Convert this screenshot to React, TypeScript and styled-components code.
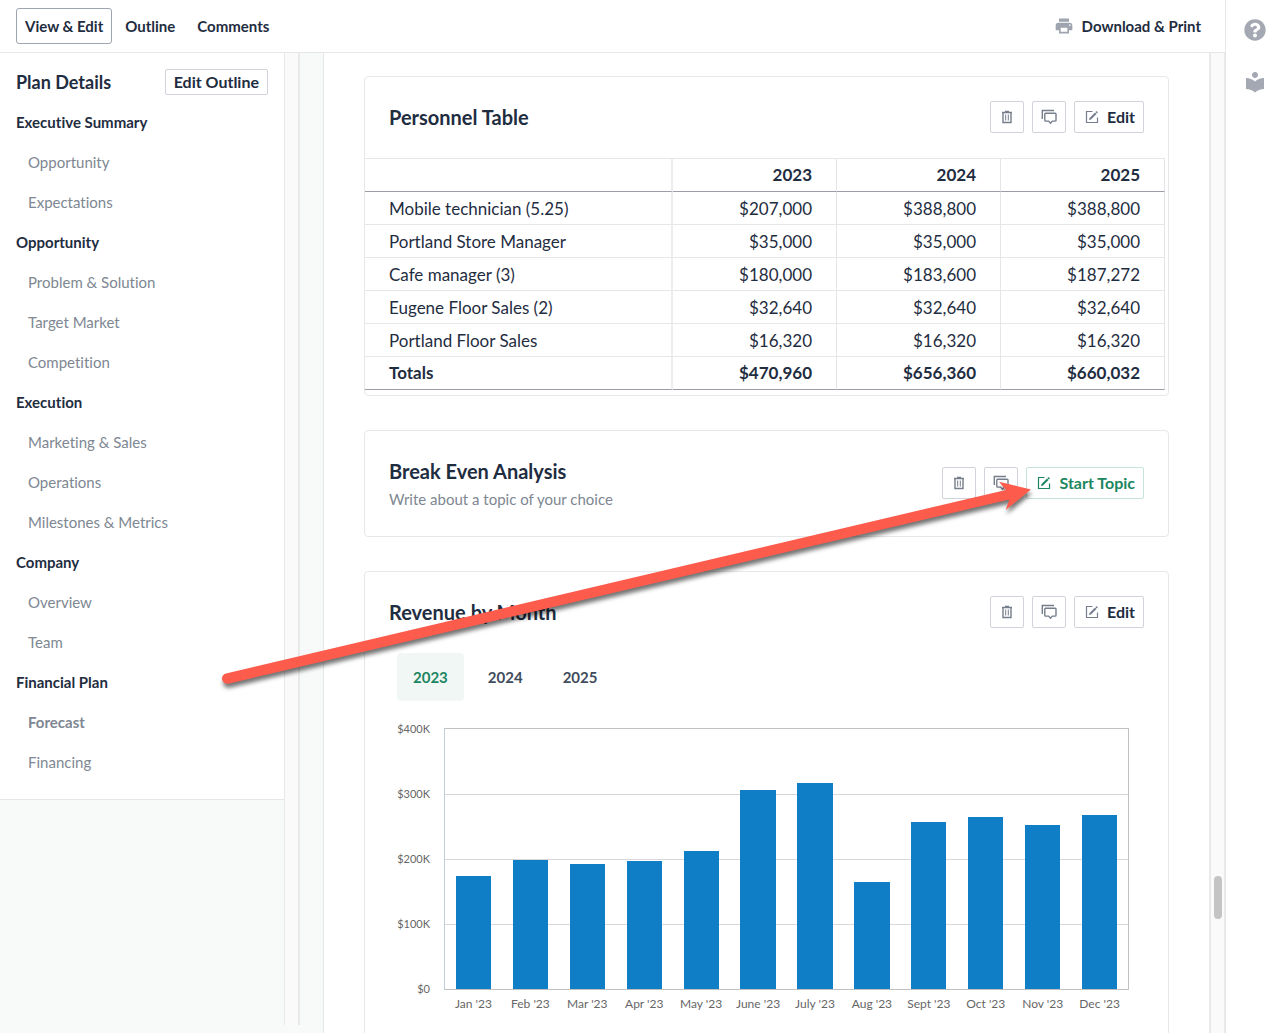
import React from "react";
import styled, { createGlobalStyle, css } from "styled-components";
import { MdLocalLibrary, MdPrint } from "react-icons/md";
import { FaQuestionCircle } from "react-icons/fa";

const ink = "#1f2d41";
const muted = "#7e8792";
const line = "#e6e8e8";
const green = "#1b8660";
const wash = "#f8faf9";

const GlobalStyle = createGlobalStyle`
  * { box-sizing: border-box; }
  body {
    margin: 0;
    color: ${ink};
    background: #fff;
    font-family: Lato, "Open Sans", sans-serif;
    font-size: 15px;
    font-variant-ligatures: none;
    line-height: 20px;
    overflow: hidden;
  }
  button, a { font: inherit; color: inherit; text-decoration: none; }
  button { cursor: pointer; margin: 0; }
  h2, h3, p, ul { margin: 0; padding: 0; }
`;

const Shell = styled.div`
  position: relative;
  display: flex;
  height: 100vh;
  overflow: hidden;
`;

const Workspace = styled.div`
  flex: 1;
  min-width: 0;
  display: flex;
  flex-direction: column;
`;

const TopBar = styled.header`
  flex: none;
  display: flex;
  align-items: center;
  justify-content: space-between;
  height: 53px;
  padding: 0 24px 0 16px;
  border-bottom: 1px solid ${line};
`;

const ViewTabs = styled.nav`
  display: flex;
  gap: 4px;
`;

const ViewTab = styled.a<{ $active?: boolean }>`
  padding: 7px 8px;
  border: 1px solid ${(p) => (p.$active ? "#9ea5b1" : "transparent")};
  border-radius: 3px;
  font-weight: 700;
`;

const PrintButton = styled.button`
  display: flex;
  align-items: center;
  gap: 8px;
  padding: 0;
  border: 0;
  background: none;
  font-weight: 700;
  svg { color: #9ea5ae; }
`;

const Columns = styled.div`
  flex: 1;
  min-height: 0;
  display: flex;
  background: ${wash};
`;

const Sidebar = styled.aside`
  flex: none;
  width: 284px;
`;

const OutlinePanel = styled.div`
  padding: 16px 16px 17px;
  background: #fff;
  border-bottom: 1px solid ${line};
`;

const OutlineHead = styled.div`
  display: flex;
  align-items: center;
  justify-content: space-between;
  margin-bottom: 7px;
`;

const OutlineTitle = styled.h2`
  font-size: 18px;
  line-height: 26px;
`;

const boxed = css`
  display: flex;
  align-items: center;
  justify-content: center;
  border: 1px solid #d0d4da;
  border-radius: 2px;
  background: #fff;
  font-weight: 700;
`;

const OutlineButton = styled.button`
  ${boxed}
  height: 26px;
  padding: 0 8px;
  font-size: 16px;
`;

const OutlineList = styled.ul`
  list-style: none;
`;

const OutlineItem = styled.li<{ $level: "chapter" | "section"; $strong?: boolean }>`
  line-height: 40px;
  padding-left: ${(p) => (p.$level === "section" ? 12 : 0)}px;
  color: ${(p) => (p.$level === "section" ? muted : ink)};
  font-weight: ${(p) => (p.$level === "chapter" || p.$strong ? 700 : 400)};
`;

const ScrollTrack = styled.div<{ $inset?: boolean }>`
  flex: none;
  width: 16px;
  margin-bottom: ${(p) => (p.$inset ? 8 : 0)}px;
  border: solid #e9e9e9;
  border-width: 0 2px 0 1px;
  background: #fafafa;
`;

const MainTrack = styled(ScrollTrack)`
  border-width: 0 1px 0 2px;
  padding-left: 3px;
`;

const ScrollThumb = styled.div`
  width: 8px;
  height: 43px;
  margin-top: 823px;
  border-radius: 4px;
  background: #c4c4c4;
`;

const Main = styled.main`
  flex: 1;
  min-width: 0;
  overflow: hidden;
  padding-left: 23px;
`;

const Paper = styled.div`
  display: flex;
  flex-direction: column;
  gap: 34px;
  padding: 23px 40px;
  border-left: 1px solid ${line};
  background: #fff;
`;

const Card = styled.section`
  border: 1px solid ${line};
  border-radius: 4px;
`;

const CardHead = styled.div`
  display: flex;
  align-items: center;
  justify-content: space-between;
  padding: 24px 24px 25px;
`;

const CardTitle = styled.h3`
  font-size: 20px;
  line-height: 32px;
`;

const CardNote = styled.p`
  line-height: 24px;
  color: ${muted};
`;

const Actions = styled.div`
  display: flex;
  gap: 8px;
`;

const IconButton = styled.button`
  ${boxed}
  width: 34px;
  height: 32px;
  padding: 0;
  color: #767e8c;
`;

const TextButton = styled.button<{ $primary?: boolean }>`
  ${boxed}
  gap: 8px;
  height: 32px;
  padding: 0 8px 0 10px;
  font-size: 16px;
  ${(p) => p.$primary && css`color: ${green}; border-color: #c6e3d9;`}
  svg { color: ${(p) => (p.$primary ? green : "#767e8c")}; }
`;

const TableWrap = styled.div`
  padding: 0 3px 5px 0;
`;

const Table = styled.table`
  width: 100%;
  table-layout: fixed;
  border-collapse: separate;
  border-spacing: 0;
  border-top: 1px solid ${line};
  font-size: 17px;
  th, td {
    height: 33px;
    padding: 0 24px;
    border-right: 1px solid #e3e5e6;
    border-bottom: 1px solid ${line};
    text-align: right;
    font-weight: 400;
  }
  tbody th, tbody td {
    padding-top: 2px;
  }
  th:first-child {
    text-align: left;
    border-right-width: 2px;
    border-right-color: #eceeee;
  }
  thead th, tfoot th, tfoot td {
    font-weight: 700;
    border-bottom-color: #9a9da8;
  }
`;

const NameCol = styled.col``;
const YearCol = styled.col`
  width: 164px;
`;

const YearTabs = styled.div`
  display: flex;
  gap: 8px;
  padding: 0 32px;
`;

const YearTab = styled.button<{ $active?: boolean }>`
  height: 48px;
  padding: 0 16px;
  border: 0;
  border-radius: 4px;
  background: ${(p) => (p.$active ? "#f1f7f5" : "transparent")};
  color: ${(p) => (p.$active ? green : "#414c5c")};
  font-weight: 700;
`;

const Chart = styled.div`
  display: grid;
  grid-template-columns: 34px minmax(0, 1fr);
  column-gap: 14px;
  padding: 27px 39px 24px 31px;
  color: #666;
  font-size: 12px;
  line-height: 14px;
`;

const Scale = styled.div`
  display: flex;
  flex-direction: column;
  justify-content: space-between;
  margin: -6px 0;
  font-size: 11px;
  text-align: right;
`;

const Plot = styled.div`
  position: relative;
  display: flex;
  height: 262px;
  border: 1px solid #c0c0c0;
  border-left-color: #c0d0e0;
`;

const GridLines = styled.div`
  position: absolute;
  inset: 0;
  display: grid;
  grid-template-rows: repeat(4, 1fr);
`;

const GridLine = styled.div`
  border-top: 1px solid #d8d8d8;
  &:first-child { border: 0; }
`;

const BarSlot = styled.div`
  position: relative;
  flex: 1;
  display: flex;
  align-items: flex-end;
  justify-content: center;
`;

const Bar = styled.div`
  width: 62%;
  background: #107dc7;
`;

const Months = styled.div`
  grid-column: 2;
  display: flex;
  padding: 7px 1px 0;
  text-align: center;
`;

const Month = styled.span`
  flex: 1;
  white-space: nowrap;
`;

const Rail = styled.aside`
  flex: none;
  width: 52px;
  display: flex;
  flex-direction: column;
  align-items: center;
  gap: 29px;
  padding: 19px 0 0 7px;
  border-left: 1px solid ${line};
`;

const RailButton = styled.button`
  display: flex;
  padding: 0;
  border: 0;
  background: none;
  color: #a3a8b2;
`;

const Pointer = styled.svg`
  position: absolute;
  left: 216px;
  top: 470px;
  pointer-events: none;
  filter: drop-shadow(1px 4px 2px rgba(0, 0, 0, 0.55));
`;

const TrashIcon = () => (
  <svg width="12" height="14" viewBox="0 0 12 14" fill="none" stroke="currentColor" aria-hidden="true">
    <path d="M1 2.500h10M4 1.500h4" strokeWidth="1.400" />
    <path d="M2 2.500v10h8v-10" strokeWidth="1.400" />
    <path d="M4.700 4.500v6M7.300 4.500v6" />
  </svg>
);

const CommentsIcon = () => (
  <svg width="16" height="16" viewBox="0 0 16 16" fill="none" stroke="currentColor" strokeWidth="1.400" aria-hidden="true">
    <path d="M1.300 10V1.500H13" />
    <path d="M4.600 4.300h9.600a.8.8 0 0 1 .8.8v6.200a.8.8 0 0 1-.8.8h-2.800l-1.900 2.200-1.900-2.200H4.600a.8.8 0 0 1-.8-.8V5.100a.8.8 0 0 1 .8-.8z" />
  </svg>
);

const EditIcon = () => (
  <svg width="14" height="14" viewBox="0 0 14 14" fill="none" stroke="currentColor" aria-hidden="true">
    <path d="M7.500 1.500h-6v11h11v-5" strokeWidth="1.200" />
    <path d="M5.300 8.700l5.500-5.500" strokeWidth="2" />
    <path d="M11.200 2.800l1-1" strokeWidth="2" />
    <path d="M4 10l.5-2.200L6.200 9.500z" fill="currentColor" stroke="none" />
  </svg>
);

const outline: { title: string; sections: string[] }[] = [
  { title: "Executive Summary", sections: ["Opportunity", "Expectations"] },
  { title: "Opportunity", sections: ["Problem & Solution", "Target Market", "Competition"] },
  { title: "Execution", sections: ["Marketing & Sales", "Operations", "Milestones & Metrics"] },
  { title: "Company", sections: ["Overview", "Team"] },
  { title: "Financial Plan", sections: ["Forecast", "Financing"] },
];

const years = ["2023", "2024", "2025"];

const personnel = [
  ["Mobile technician (5.25)", "$207,000", "$388,800", "$388,800"],
  ["Portland Store Manager", "$35,000", "$35,000", "$35,000"],
  ["Cafe manager (3)", "$180,000", "$183,600", "$187,272"],
  ["Eugene Floor Sales (2)", "$32,640", "$32,640", "$32,640"],
  ["Portland Floor Sales", "$16,320", "$16,320", "$16,320"],
];
const totals = ["$470,960", "$656,360", "$660,032"];

const revenue: [string, number][] = [
  ["Jan", 174], ["Feb", 199], ["Mar", 192], ["Apr", 197],
  ["May", 212], ["June", 306], ["July", 317], ["Aug", 165],
  ["Sept", 257], ["Oct", 265], ["Nov", 252], ["Dec", 268],
];

function TopicActions({ start }: { start?: boolean }) {
  return (
    <Actions>
      <IconButton aria-label="Delete"><TrashIcon /></IconButton>
      <IconButton aria-label="Comments"><CommentsIcon /></IconButton>
      <TextButton $primary={start}>
        <EditIcon />
        {start ? "Start Topic" : "Edit"}
      </TextButton>
    </Actions>
  );
}

function PlanOutline() {
  return (
    <Sidebar>
      <OutlinePanel>
        <OutlineHead>
          <OutlineTitle>Plan Details</OutlineTitle>
          <OutlineButton>Edit Outline</OutlineButton>
        </OutlineHead>
        <OutlineList>
          {outline.map((chapter) => (
            <React.Fragment key={chapter.title}>
              <OutlineItem $level="chapter"><a href="#chapter">{chapter.title}</a></OutlineItem>
              {chapter.sections.map((s) => (
                <OutlineItem key={s} $level="section" $strong={s === "Forecast"}>
                  <a href="#section">{s}</a>
                </OutlineItem>
              ))}
            </React.Fragment>
          ))}
        </OutlineList>
      </OutlinePanel>
    </Sidebar>
  );
}

function PersonnelTable() {
  return (
    <TableWrap>
      <Table>
        <colgroup>
          <NameCol />
          {years.map((y) => <YearCol key={y} />)}
        </colgroup>
        <thead>
          <tr>
            <th />
            {years.map((y) => <th key={y} scope="col">{y}</th>)}
          </tr>
        </thead>
        <tbody>
          {personnel.map(([name, ...pay]) => (
            <tr key={name}>
              <th scope="row">{name}</th>
              {pay.map((v, i) => <td key={i}>{v}</td>)}
            </tr>
          ))}
        </tbody>
        <tfoot>
          <tr>
            <th scope="row">Totals</th>
            {totals.map((v) => <td key={v}>{v}</td>)}
          </tr>
        </tfoot>
      </Table>
    </TableWrap>
  );
}

function RevenueChart() {
  return (
    <Chart>
      <Scale>
        {["$400K", "$300K", "$200K", "$100K", "$0"].map((s) => <span key={s}>{s}</span>)}
      </Scale>
      <Plot>
        <GridLines>
          <GridLine /><GridLine /><GridLine /><GridLine />
        </GridLines>
        {revenue.map(([month, value]) => (
          <BarSlot key={month}>
            <Bar style={{ height: `${value / 4}%` }} />
          </BarSlot>
        ))}
      </Plot>
      <Months>
        {revenue.map(([month]) => <Month key={month}>{`${month} '23`}</Month>)}
      </Months>
    </Chart>
  );
}

export default function App() {
  return (
    <Shell>
      <GlobalStyle />
      <Workspace>
        <TopBar>
          <ViewTabs>
            <ViewTab href="#edit" $active>View &amp; Edit</ViewTab>
            <ViewTab href="#outline">Outline</ViewTab>
            <ViewTab href="#comments">Comments</ViewTab>
          </ViewTabs>
          <PrintButton><MdPrint size={20} />Download &amp; Print</PrintButton>
        </TopBar>
        <Columns>
          <PlanOutline />
          <ScrollTrack $inset />
          <Main>
            <Paper>
              <Card>
                <CardHead>
                  <CardTitle>Personnel Table</CardTitle>
                  <TopicActions />
                </CardHead>
                <PersonnelTable />
              </Card>
              <Card>
                <CardHead>
                  <div>
                    <CardTitle>Break Even Analysis</CardTitle>
                    <CardNote>Write about a topic of your choice</CardNote>
                  </div>
                  <TopicActions start />
                </CardHead>
              </Card>
              <Card>
                <CardHead>
                  <CardTitle>Revenue by Month</CardTitle>
                  <TopicActions />
                </CardHead>
                <YearTabs>
                  {years.map((y) => <YearTab key={y} $active={y === "2023"}>{y}</YearTab>)}
                </YearTabs>
                <RevenueChart />
              </Card>
            </Paper>
          </Main>
          <MainTrack><ScrollThumb /></MainTrack>
        </Columns>
      </Workspace>
      <Rail>
        <RailButton aria-label="Help"><FaQuestionCircle size={22} /></RailButton>
        <RailButton aria-label="Library"><MdLocalLibrary size={24} /></RailButton>
      </Rail>
      <Pointer width="820" height="220" viewBox="216 470 820 220" aria-hidden="true">
        <path
          d="M226 673.400L1006 489.900L999 481.700L1031 489.600L1005.700 510L1009.300 499.400L228.500 683.700A5.300 5.300 0 0 1 226 673.400Z"
          fill="#fd5b4c"
        />
      </Pointer>
    </Shell>
  );
}
